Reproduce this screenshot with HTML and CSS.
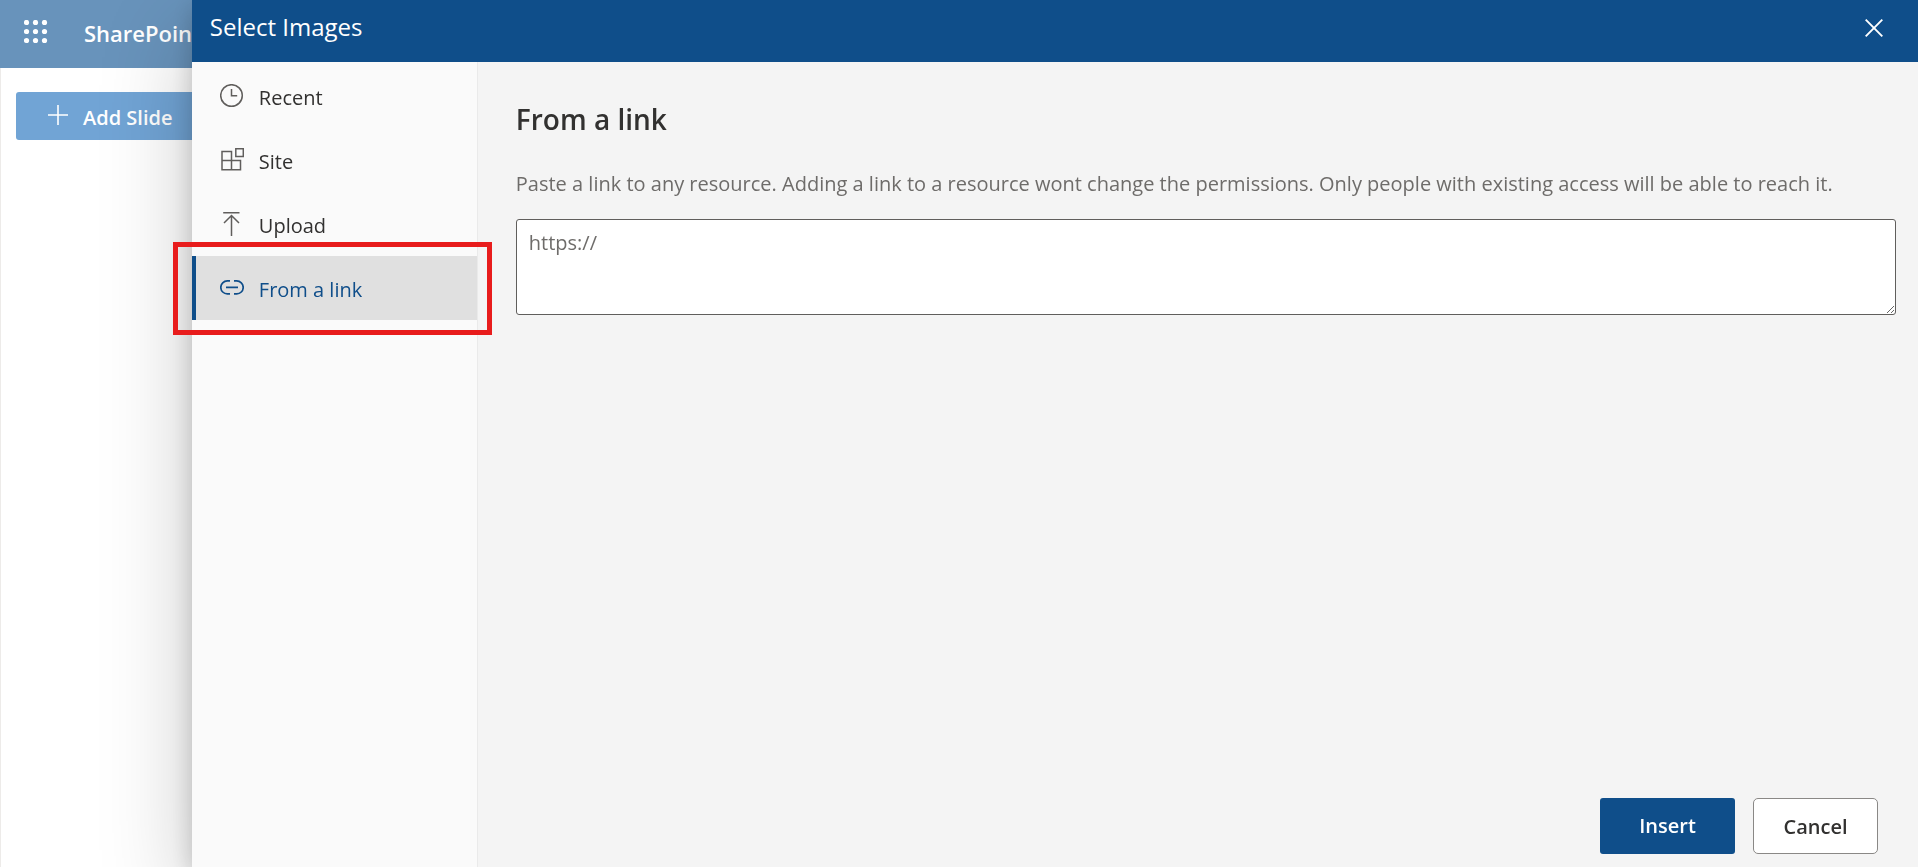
FILE: index.html
```html
<!DOCTYPE html>
<html lang="en">
<head>
<meta charset="utf-8">
<title>Select Images</title>
<link rel="stylesheet" href="styles.css">
</head>
<body>
<div class="app">
  <header class="suite-bar">
    <button class="icon-button" type="button" aria-label="App launcher">
      <svg width="24" height="24" viewBox="0 0 24 24" fill="#fff">
        <circle cx="2.5" cy="2.5" r="2.6"/><circle cx="11.5" cy="2.5" r="2.6"/><circle cx="20.5" cy="2.5" r="2.6"/>
        <circle cx="2.5" cy="11.5" r="2.6"/><circle cx="11.5" cy="11.5" r="2.6"/><circle cx="20.5" cy="11.5" r="2.6"/>
        <circle cx="2.5" cy="20.5" r="2.6"/><circle cx="11.5" cy="20.5" r="2.6"/><circle cx="20.5" cy="20.5" r="2.6"/>
      </svg>
    </button>
    <a class="suite-name" href="#">SharePoint</a>
  </header>
  <div class="canvas">
    <button class="add-slide" type="button">
      <svg width="20" height="20" viewBox="0 0 20 20" fill="none" stroke="#fff" stroke-width="1.6"><path d="M10 0v20M0 10h20"/></svg>
      <span>Add Slide</span>
    </button>
  </div>
</div>
<section class="drawer" role="dialog" aria-labelledby="drawer-title">
  <header class="drawer-header">
    <h1 class="drawer-title" id="drawer-title">Select Images</h1>
    <button class="icon-button" type="button" aria-label="Close">
      <svg width="18" height="18" viewBox="0 0 18 18" fill="none" stroke="#fff" stroke-width="1.9"><path d="M.7.7l16.6 16.6M17.3.7L.7 17.3"/></svg>
    </button>
  </header>
  <div class="drawer-body">
    <nav class="sources" aria-label="Image sources">
      <a class="source" href="#recent">
        <svg class="source-icon" viewBox="0 0 24 24"><circle cx="11.5" cy="11.5" r="10.8"/><path d="M11.5 5v6.7h5.7"/></svg>
        Recent
      </a>
      <a class="source" href="#site">
        <svg class="source-icon" viewBox="0 0 24 24"><path d="M2 12.5h18.5v9.3H2zM2 3.5h9.5v18.3H2zM15.8.8h7.5v7.8h-7.5z"/></svg>
        Site
      </a>
      <a class="source" href="#upload">
        <svg class="source-icon" viewBox="0 0 24 24"><path d="M3.2.8h16.3M11.5 24V3.5M4 11l7.5-7.5L19 11"/></svg>
        Upload
      </a>
      <a class="source source-active" href="#link" aria-current="page">
        <svg class="source-icon" viewBox="0 0 24 24"><path d="M10 4.9H7.3a6.5 6.5 0 0 0 0 13H10M14 4.9h2.7a6.5 6.5 0 0 1 0 13H14M6 11.4h12"/></svg>
        From a link
        <span class="callout" aria-hidden="true"></span>
      </a>
    </nav>
    <main class="panel">
      <h2 class="panel-title">From a link</h2>
      <label class="panel-text" for="link-url">Paste a link to any resource. Adding a link to a resource wont change the permissions. Only people with existing access will be able to reach it.</label>
      <textarea class="link-input" id="link-url" placeholder="https://"></textarea>
      <div class="actions">
        <button class="button button-primary" type="button">Insert</button>
        <button class="button button-default" type="button">Cancel</button>
      </div>
    </main>
  </div>
</section>
</body>
</html>
```
FILE: styles.css
```css
* { box-sizing: border-box; }
body {
  margin: 0;
  overflow: hidden;
  background: #fff;
  color: #323130;
  font: 20px/28px "Open Sans", "Noto Sans", sans-serif;
}
button { font: inherit; cursor: pointer; }
a { color: inherit; text-decoration: none; }
svg { display: block; flex: none; }

.app { display: flex; flex-direction: column; height: 100vh; }
.suite-bar {
  display: flex;
  align-items: center;
  gap: 36px;
  height: 68px;
  padding: 0 24px 4px;
  background: #6893bb;
  color: #fff;
}
.icon-button { padding: 0; border: 0; background: none; }
.suite-name { padding-top: 2px; font-weight: 600; font-size: 22px; }
.canvas { flex: 1; padding: 24px 15px; border-left: 1px solid #edebe9; }
.add-slide {
  display: flex;
  align-items: center;
  gap: 15px;
  height: 48px;
  padding: 0 32px;
  border: 0;
  border-radius: 3px;
  background: #71a4d5;
  color: #fff;
  font-weight: 600;
}
.add-slide svg { margin-bottom: 2px; }
.add-slide span { padding-top: 4px; }

.drawer {
  position: fixed;
  top: 0;
  right: 0;
  bottom: 0;
  display: flex;
  flex-direction: column;
  width: 90%;
  background: #f4f4f4;
  box-shadow: 0 34px 86px rgba(0, 0, 0, .22), 0 6px 22px rgba(0, 0, 0, .18);
}
.drawer-header {
  display: flex;
  align-items: center;
  justify-content: space-between;
  height: 62px;
  padding: 0 35px 6px 18px;
  background: #0f4e8a;
  color: #fff;
}
.drawer-title { margin: 0; padding-bottom: 2px; font-size: 24px; font-weight: 400; }
.drawer-body { display: flex; flex: 1; }
.sources {
  width: 286px;
  padding-top: 2px;
  border-right: 1px solid #eaeaea;
  background: #fafafa;
}
.source {
  position: relative;
  display: flex;
  align-items: center;
  gap: 15px;
  height: 64px;
  padding: 4px 24px 0;
  border-left: 4px solid transparent;
}
.source-icon {
  width: 24px;
  height: 24px;
  margin-bottom: 4px;
  fill: none;
  stroke: #605e5c;
  stroke-width: 1.5;
}
.source-active { border-color: #0f4e8a; background: #e0e0e0; color: #0f4e8a; }
.source-active .source-icon { stroke: #0f4e8a; stroke-width: 1.7; }
.callout {
  position: absolute;
  inset: -14px -15px -15px -23px;
  border: 5px solid #e81c1c;
}

.panel {
  display: flex;
  flex: 1;
  flex-direction: column;
  padding: 39px 22px 13px 38px;
}
.panel-title { margin: 0 0 33px; font-size: 28px; line-height: 36px; font-weight: 600; }
.panel-text { margin-bottom: 21px; color: #6e6c6a; }
.link-input {
  display: block;
  width: 100%;
  height: 96px;
  padding: 9px 12px;
  border: 1px solid #605e5c;
  border-radius: 3px;
  background: #fff;
  font: inherit;
}
.link-input::placeholder { color: #6e6c6a; }
.actions { display: flex; justify-content: flex-end; gap: 18px; margin-top: auto; padding-right: 18px; }
.button { height: 56px; padding: 0; border-radius: 3px; font-weight: 600; }
.button-primary { width: 135px; border: 0; background: #0f4e8a; color: #fff; }
.button-default { width: 125px; padding-top: 2px; border: 1px solid #8a8886; border-radius: 5px; background: #fff; color: #323130; }
```
